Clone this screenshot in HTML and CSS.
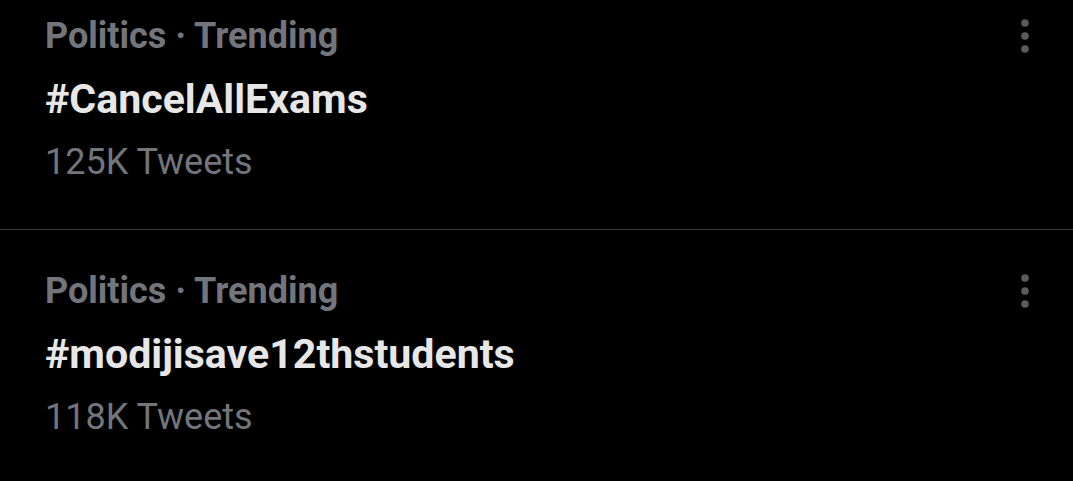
FILE: index.html
```html
<!DOCTYPE html>
<html>
<head>
<meta charset="utf-8">
<link rel="stylesheet" href="styles.css">
</head>
<body>
<div class="list">
  <div class="trend">
    <div class="text">
      <div class="meta">Politics · Trending</div>
      <div class="tag">#CancelAllExams</div>
      <div class="count">125K Tweets</div>
    </div>
    <svg class="more" width="14" height="40" viewBox="0 0 14 40"><circle cx="7" cy="7" r="3.8"/><circle cx="7" cy="20" r="3.8"/><circle cx="7" cy="33" r="3.8"/></svg>
  </div>
  <div class="trend">
    <div class="text">
      <div class="meta">Politics · Trending</div>
      <div class="tag">#modijisave12thstudents</div>
      <div class="count">118K Tweets</div>
    </div>
    <svg class="more" width="14" height="40" viewBox="0 0 14 40"><circle cx="7" cy="7" r="3.8"/><circle cx="7" cy="20" r="3.8"/><circle cx="7" cy="33" r="3.8"/></svg>
  </div>
</div>
</body>
</html>
```
FILE: styles.css
```css
html, body { margin: 0; padding: 0; background: #000; }
body { font-family: Roboto, "Noto Sans", sans-serif; width: 1073px; height: 481px; overflow: hidden; }
.list { display: flex; flex-direction: column; }
.trend { display: flex; justify-content: space-between; align-items: flex-start; padding: 14px 41px 0 45px; height: 230px; box-sizing: border-box; border-bottom: 1px solid #3a3a3a; }
.trend + .trend { height: 251px; padding-top: 39px; border-bottom: none; }
.meta { font-size: 36px; font-weight: 700; color: #72767c; line-height: 44px; }
.tag { font-size: 41.1px; font-weight: 700; color: #e7e7e8; line-height: 48px; margin-top: 17px; }
.count { font-size: 36px; font-weight: 400; color: #72767c; line-height: 44px; margin-top: 17px; }
.more { fill: #5c5c5e; flex: none; margin-top: 2px; }
```
